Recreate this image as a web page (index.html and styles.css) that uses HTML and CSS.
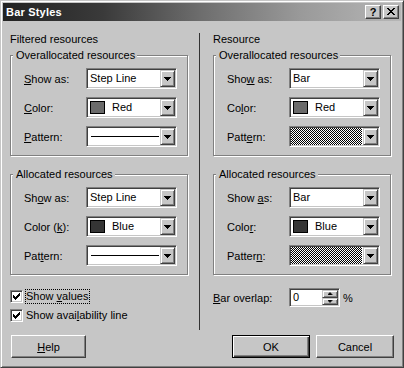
FILE: index.html
```html
<!DOCTYPE html>
<html lang="en">
<head>
<meta charset="utf-8">
<title>Bar Styles</title>
<link rel="stylesheet" href="styles.css">
</head>
<body>
<div class="window">
  <div class="titlebar">
    <span class="title">Bar Styles</span>
    <div class="caption-btns">
      <span class="cbtn cbtn-help">?</span>
      <span class="cbtn cbtn-close"><svg width="8" height="7" viewBox="0 0 8 7" shape-rendering="crispEdges"><path d="M0 0h2v1H0zM6 0h2v1H6zM1 1h2v1H1zM5 1h2v1H5zM2 2h4v1H2zM3 3h2v1H3zM2 4h4v1H2zM1 5h2v1H1zM5 5h2v1H5zM0 6h2v1H0zM6 6h2v1H6z" fill="#000"/></svg></span>
    </div>
  </div>
  <div class="client">
    <div class="panes">
      <div class="pane">
        <div class="heading">Filtered resources</div>
        <div class="group">
          <div class="group-title">Overallocated resources</div>
          <div class="rows">
            <div class="row"><span class="lbl"><u>S</u>how as:</span><div class="combo"><span class="val">Step Line</span><span class="drop"></span></div></div>
            <div class="row"><span class="lbl"><u>C</u>olor:</span><div class="combo"><span class="val"><i class="swatch swatch-red"></i>Red</span><span class="drop"></span></div></div>
            <div class="row"><span class="lbl"><u>P</u>attern:</span><div class="combo"><span class="val"><i class="pline"></i></span><span class="drop"></span></div></div>
          </div>
        </div>
        <div class="group group-2">
          <div class="group-title">Allocated resources</div>
          <div class="rows">
            <div class="row"><span class="lbl">Sh<u>o</u>w as:</span><div class="combo"><span class="val">Step Line</span><span class="drop"></span></div></div>
            <div class="row"><span class="lbl">Color (<u>k</u>):</span><div class="combo"><span class="val"><i class="swatch swatch-blue"></i>Blue</span><span class="drop"></span></div></div>
            <div class="row"><span class="lbl">Pat<u>t</u>ern:</span><div class="combo"><span class="val"><i class="pline"></i></span><span class="drop"></span></div></div>
          </div>
        </div>
        <div class="checks">
          <div class="check-row"><span class="checkbox"><svg width="7" height="7" viewBox="0 0 7 7" shape-rendering="crispEdges"><path d="M0 2h1v3H0zM1 3h1v3H1zM2 4h1v3H2zM3 3h1v3H3zM4 2h1v3H4zM5 1h1v3H5zM6 0h1v3H6z" fill="#000"/></svg></span><span class="check-text focus">Show <u>v</u>alues</span></div>
          <div class="check-row"><span class="checkbox"><svg width="7" height="7" viewBox="0 0 7 7" shape-rendering="crispEdges"><path d="M0 2h1v3H0zM1 3h1v3H1zM2 4h1v3H2zM3 3h1v3H3zM4 2h1v3H4zM5 1h1v3H5zM6 0h1v3H6z" fill="#000"/></svg></span><span class="check-text">Show avai<u>l</u>ability line</span></div>
        </div>
      </div>
      <div class="divider"></div>
      <div class="pane">
        <div class="heading">Resource</div>
        <div class="group">
          <div class="group-title">Overallocated resources</div>
          <div class="rows">
            <div class="row"><span class="lbl">Sho<u>w</u> as:</span><div class="combo"><span class="val">Bar</span><span class="drop"></span></div></div>
            <div class="row"><span class="lbl">Co<u>l</u>or:</span><div class="combo"><span class="val"><i class="swatch swatch-red"></i>Red</span><span class="drop"></span></div></div>
            <div class="row"><span class="lbl">Patt<u>e</u>rn:</span><div class="combo"><span class="val val-pattern"></span><span class="drop"></span></div></div>
          </div>
        </div>
        <div class="group group-2">
          <div class="group-title">Allocated resources</div>
          <div class="rows">
            <div class="row"><span class="lbl">Show <u>a</u>s:</span><div class="combo"><span class="val">Bar</span><span class="drop"></span></div></div>
            <div class="row"><span class="lbl">Colo<u>r</u>:</span><div class="combo"><span class="val"><i class="swatch swatch-blue"></i>Blue</span><span class="drop"></span></div></div>
            <div class="row"><span class="lbl">Patter<u>n</u>:</span><div class="combo"><span class="val val-pattern"></span><span class="drop"></span></div></div>
          </div>
        </div>
        <div class="overlap-row">
          <span class="lbl"><u>B</u>ar overlap:</span>
          <div class="spin">
            <span class="spin-val">0</span>
            <div class="spin-btns"><span class="sb sb-up"></span><span class="sb sb-down"></span></div>
          </div>
          <span class="pct">%</span>
        </div>
      </div>
    </div>
    <div class="btnrow">
      <span class="btn btn-help"><span><u>H</u>elp</span></span>
      <div class="btn-group">
        <span class="btn btn-default">OK</span>
        <span class="btn">Cancel</span>
      </div>
    </div>
  </div>
</div>
</body>
</html>
```

FILE: styles.css
```css
:root {
  --face: #c6c6c6;
  --light: #ffffff;
  --shadow: #808080;
  --dark: #404040;
}

* { box-sizing: border-box; }

html, body { margin: 0; padding: 0; }

body {
  width: 404px;
  height: 368px;
  font-family: "Liberation Sans", Arial, sans-serif;
  font-size: 11px;
  color: #000;
  background: var(--face);
}

u { text-decoration: underline; text-underline-offset: 1px; }

.window {
  width: 404px;
  height: 368px;
  background: var(--face);
  border: 1px solid;
  border-color: var(--face) var(--dark) var(--dark) var(--face);
  box-shadow: inset 1px 1px var(--light), inset -1px -1px var(--shadow);
  padding: 2px;
  display: flex;
  flex-direction: column;
}

/* title bar */
.titlebar {
  height: 18px;
  flex: none;
  display: flex;
  align-items: center;
  justify-content: space-between;
  padding-left: 3px;
  padding-right: 2px;
  background: linear-gradient(to right, #222222 0%, #3a3a3a 25%, #6e6e6e 50%, #9a9a9a 75%, #b6b6b6 100%);
}

.title {
  color: #fff;
  font-weight: bold;
  font-size: 11px;
  letter-spacing: 0.2px;
  line-height: 18px;
}

.caption-btns {
  display: flex;
  gap: 2px;
}

.cbtn {
  width: 16px;
  height: 14px;
  background: var(--face);
  border: 1px solid;
  border-color: var(--light) var(--dark) var(--dark) var(--light);
  box-shadow: inset -1px -1px var(--shadow);
  display: flex;
  align-items: center;
  justify-content: center;
  font-weight: bold;
  font-size: 11px;
  line-height: 12px;
  color: #000;
}

.cbtn-help { padding-bottom: 1px; }
.cbtn-close svg { display: block; margin-top: -1px; }

/* client */
.client {
  flex: 1;
  padding: 12px 7px 0 7px;
  display: flex;
  flex-direction: column;
}

.panes {
  display: flex;
  height: 297px;
}

.pane {
  width: 178px;
  display: flex;
  flex-direction: column;
}

.divider {
  width: 1px;
  background: #333;
  margin: 0 13px 0 11px;
}

.heading {
  line-height: 13px;
  height: 13px;
  white-space: nowrap;
}

/* group box */
.group {
  position: relative;
  margin-top: 9px;
  border: 1px solid var(--shadow);
  box-shadow: inset 1px 1px var(--light), 1px 1px var(--light);
  padding: 12px 0 8px 13px;
}

.group-2 { margin-top: 18px; }

.group-title {
  position: absolute;
  top: -7px;
  left: 2px;
  padding: 0 2px 0 3px;
  line-height: 13px;
  background: var(--face);
  white-space: nowrap;
}

.rows {
  display: flex;
  flex-direction: column;
  gap: 8px;
}

.row {
  display: flex;
  align-items: center;
  height: 21px;
}

.lbl {
  width: 62px;
  white-space: nowrap;
}

/* combobox */
.combo {
  width: 91px;
  height: 21px;
  background: #fff;
  border: 1px solid;
  border-color: var(--shadow) var(--light) var(--light) var(--shadow);
  box-shadow: inset 1px 1px var(--dark), inset -1px -1px var(--face);
  padding: 1px;
  display: flex;
}

.val {
  flex: 1;
  display: flex;
  align-items: center;
  padding-left: 2px;
  line-height: 17px;
  white-space: nowrap;
  overflow: hidden;
}

.val-pattern {
  padding: 0;
  margin: 0 1px 0 0;
  background: repeating-conic-gradient(#000 0 25%, #fff 0 50%) 0 0 / 2px 2px;
}

.swatch {
  display: block;
  width: 15px;
  height: 13px;
  border: 1px solid #000;
  margin-right: 7px;
}

.swatch-red { background: #6b6b6b; }
.swatch-blue { background: #353535; }

.pline {
  display: block;
  flex: 1;
  height: 1px;
  background: #000;
  margin: 0 1px 0 1px;
}

.drop {
  width: 15px;
  height: 17px;
  flex: none;
  background: var(--face);
  border: 1px solid;
  border-color: var(--face) var(--dark) var(--dark) var(--face);
  box-shadow: inset 1px 1px var(--light), inset -1px -1px var(--shadow);
  display: flex;
  justify-content: center;
  align-items: flex-start;
  padding-top: 6px;
}

.drop::after {
  content: "";
  width: 7px;
  height: 4px;
  background: #000;
  clip-path: polygon(0 0, 7px 0, 7px 1px, 6px 1px, 6px 2px, 5px 2px, 5px 3px, 4px 3px, 4px 4px, 3px 4px, 3px 3px, 2px 3px, 2px 2px, 1px 2px, 1px 1px, 0 1px);
}

/* checkboxes */
.checks {
  margin-top: 14px;
  display: flex;
  flex-direction: column;
  gap: 4px;
}

.check-row {
  display: flex;
  align-items: center;
  height: 15px;
}

.checkbox {
  width: 13px;
  height: 13px;
  flex: none;
  background: #fff;
  border: 1px solid;
  border-color: var(--shadow) var(--light) var(--light) var(--shadow);
  box-shadow: inset 1px 1px var(--dark), inset -1px -1px var(--face);
  padding: 2px 0 0 2px;
}

.checkbox svg { display: block; }

.check-text {
  margin-left: 2px;
  border: 1px solid transparent;
  line-height: 13px;
  padding-right: 1px;
  white-space: nowrap;
}

.check-text.focus { border: 1px dotted #000; }

/* bar overlap */
.overlap-row {
  margin-top: 13px;
  display: flex;
  align-items: center;
  height: 19px;
}

.overlap-row .lbl { width: 76px; }

.spin {
  width: 51px;
  height: 19px;
  background: #fff;
  border: 1px solid;
  border-color: var(--shadow) var(--light) var(--light) var(--shadow);
  box-shadow: inset 1px 1px var(--dark), inset -1px -1px var(--face);
  padding: 1px;
  display: flex;
}

.spin-val {
  flex: 1;
  padding-left: 2px;
  line-height: 15px;
}

.spin-btns {
  width: 16px;
  display: flex;
  flex-direction: column;
}

.sb {
  flex: 1;
  background: var(--face);
  border: 1px solid;
  border-color: var(--face) var(--dark) var(--dark) var(--face);
  box-shadow: inset 1px 1px var(--light), inset -1px -1px var(--shadow);
  display: flex;
  justify-content: center;
  align-items: center;
}

.sb::after {
  content: "";
  width: 5px;
  height: 3px;
  background: #000;
}

.sb-up::after {
  clip-path: polygon(2px 0, 3px 0, 3px 1px, 4px 1px, 4px 2px, 5px 2px, 5px 3px, 0 3px, 0 2px, 1px 2px, 1px 1px, 2px 1px);
}

.sb-down::after {
  clip-path: polygon(0 0, 5px 0, 5px 1px, 4px 1px, 4px 2px, 3px 2px, 3px 3px, 2px 3px, 2px 2px, 1px 2px, 1px 1px, 0 1px);
}

.pct { margin-left: 3px; }

/* buttons */
.btnrow {
  margin-top: 5px;
  width: 384px;
  padding-left: 1px;
  display: flex;
  justify-content: space-between;
}

.btn-group {
  display: flex;
  gap: 6px;
}

.btn {
  width: 78px;
  height: 23px;
  background: var(--face);
  border: 1px solid;
  border-color: var(--light) var(--dark) var(--dark) var(--light);
  box-shadow: inset -1px -1px var(--shadow);
  display: flex;
  align-items: center;
  justify-content: center;
}

.btn-help { width: 75px; }

.btn-default {
  border: 1px solid #000;
  box-shadow: inset 1px 1px var(--light), inset -1px -1px var(--dark), inset -2px -2px var(--shadow);
}
```
